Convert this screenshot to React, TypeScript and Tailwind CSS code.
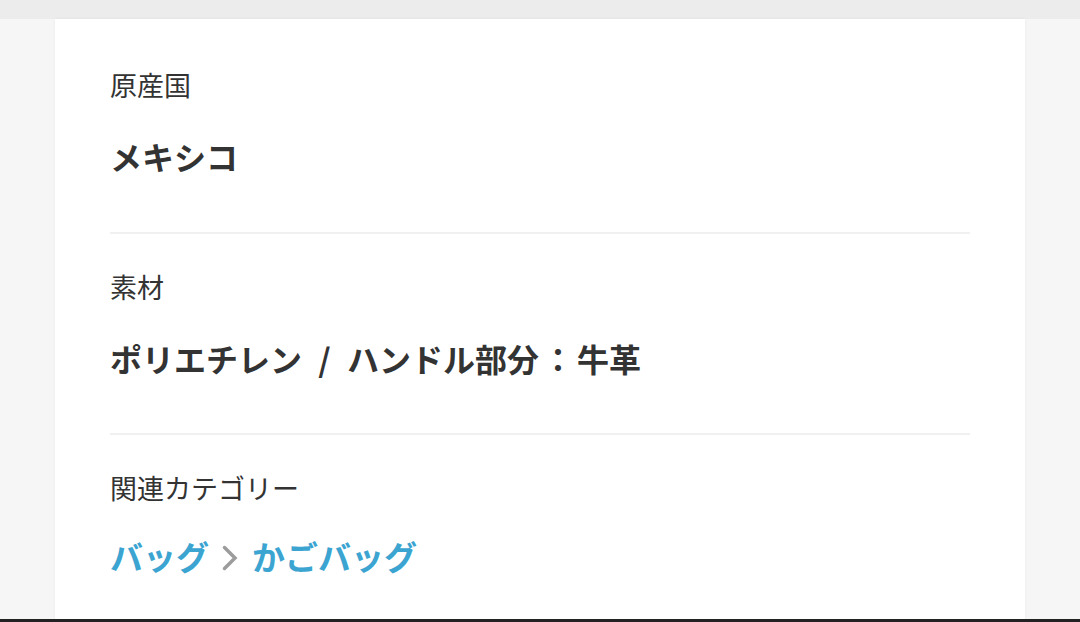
const FONT = "font-['Noto_Sans_CJK_JP','Noto_Sans',sans-serif]";

function Label({ children }: { children: React.ReactNode }) {
  return <p className="text-[27px] leading-[39px] text-[#333]">{children}</p>;
}

function Value({ children }: { children: React.ReactNode }) {
  return (
    <p className="mt-[28px] text-[32px] leading-[48px] font-bold text-[#333] [text-spacing-trim:space-all]">
      {children}
    </p>
  );
}

function ChevronRight() {
  return (
    <svg width="16" height="26" viewBox="0 0 16 26" className="ml-[13px] mr-[14px] mt-[3px]">
      <path d="M2.5 2.5 L13 13 L2.5 23.5" fill="none" stroke="#9c9c9c" strokeWidth="3.5" strokeLinecap="round" strokeLinejoin="miter" />
    </svg>
  );
}

export default function App() {
  return (
    <div className={`${FONT} w-[1080px] h-[622px] overflow-hidden flex flex-col bg-[#f6f6f6]`}>
      <div className="h-[19px] shrink-0 bg-[#ececec]" />
      <div className="flex-1 flex justify-center">
        <div className="w-[970px] bg-white px-[55px] pt-[13px] shadow-[0_0_3px_rgba(0,0,0,0.06)]">
          <section className="pt-[33px] pb-[52px] border-b-2 border-[#f0f0f0]">
            <Label>原産国</Label>
            <Value>メキシコ</Value>
          </section>
          <section className="pt-[33px] pb-[51px] border-b-2 border-[#f0f0f0]">
            <Label>素材</Label>
            <Value>
              ポリエチレン<span className="mx-[9px]"> / </span>ハンドル部分<span className="mx-[3px]">：</span>牛革
            </Value>
          </section>
          <section className="pt-[33px]">
            <Label>関連カテゴリー</Label>
            <div className="mt-[25px] flex items-center text-[33px] leading-[48px] font-bold text-[#3ba4d1]">
              <span>バッグ</span>
              <ChevronRight />
              <span>かごバッグ</span>
            </div>
          </section>
        </div>
      </div>
      <div className="h-[3px] shrink-0 bg-[#222]" />
    </div>
  );
}
